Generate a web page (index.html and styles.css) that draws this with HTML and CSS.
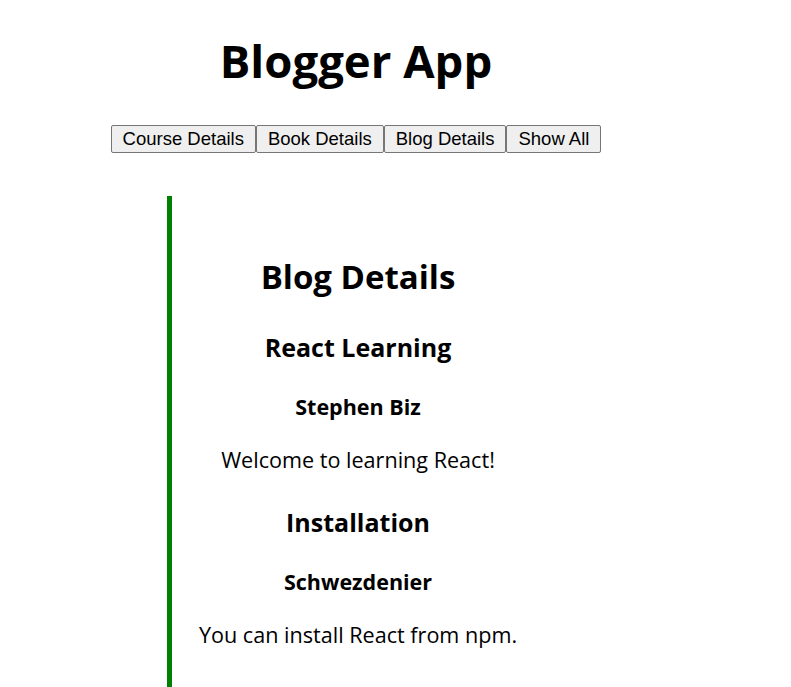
FILE: index.html
```html
<!DOCTYPE html>
<html lang="en">
<head>
    <meta charset="UTF-8">
    <meta name="viewport" content="width=device-width, initial-scale=1.0">
    <title>Blogger App</title>
    <link rel="stylesheet" href="styles.css">
</head>
<body>
    <div class="app">
        <h1 class="app-title">Blogger App</h1>
        <div class="nav"><button>Course Details</button><button>Book Details</button><button>Blog Details</button><button>Show All</button></div>
    </div>

    <!-- Blog details section -->
    <div class="blog">
        <h2>Blog Details</h2>
        <div class="post">
            <h3>React Learning</h3>
            <h4>Stephen Biz</h4>
            <p>Welcome to learning React!</p>
        </div>
        <div class="post">
            <h3>Installation</h3>
            <h4>Schwezdenier</h4>
            <p>You can install React from npm.</p>
        </div>
    </div>
</body>
</html>
```

FILE: styles.css
```css
body {
    font-family: "Open Sans", "Noto Sans", sans-serif;
    margin: 0;
    padding: 0 0 0 8px;
    color: #000;
    background: #fff;
    overflow: hidden;
}

.app {
    width: 696px;
    text-align: center;
}

.app-title {
    font-size: 45.5px;
    font-weight: 700;
    margin: 0;
    padding-top: 28px;
    line-height: 64px;
}

.nav {
    margin-top: 33px;
}

.nav button {
    font-family: "Liberation Sans", Arial, sans-serif;
    font-size: 18.5px;
    padding: 2px 11px;
    background-color: #efefef;
    border: 1px solid #767676;
    border-radius: 2px;
    color: #000;
    line-height: 22px;
}

.blog {
    margin: 43px 0 0 159px;
    width: 372px;
    border-left: 5px solid #008000;
    text-align: center;
    padding: 58px 0 8px;
    line-height: 1.4;
}

.blog h2 {
    font-size: 33px;
    margin: 0 0 30px;
}

.post h3 {
    font-size: 25px;
    margin: 0 0 27px;
}

.post h4 {
    font-size: 21.5px;
    margin: 0 0 23px;
}

.post p {
    font-size: 21.6px;
    margin: 0 0 29px;
}
```
